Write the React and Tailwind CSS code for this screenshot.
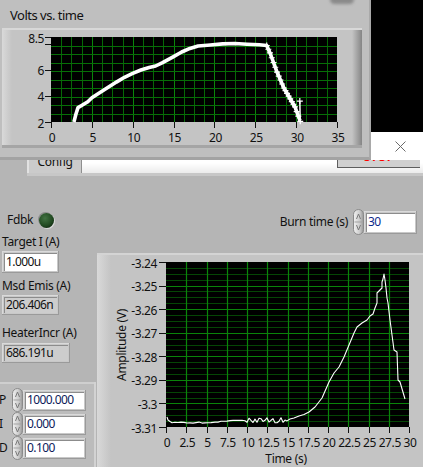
import React from 'react';

// deterministic jitter for the noisy part of the trace
const noise = (i) => {
  const x = Math.sin(i * 12.9898) * 43758.5453;
  return x - Math.floor(x);
};
const px = (v) => Math.round(v) + 0.5;

const Spinner = ({ h = 24 }) => (
  <svg width="11" height={h} viewBox={`0 0 11 ${h}`} className="block shrink-0">
    <defs>
      <linearGradient id="spg" x1="0" y1="0" x2="1" y2="0">
        <stop offset="0" stopColor="#f2f2f2" />
        <stop offset="0.6" stopColor="#cdcdcd" />
        <stop offset="1" stopColor="#979797" />
      </linearGradient>
    </defs>
    <rect x="0.5" y="0.5" width="10" height={h - 1} rx="5" fill="url(#spg)" stroke="#8a8a8a" />
    <line x1="1.5" x2="9.5" y1={h / 2} y2={h / 2} stroke="#a3a3a3" />
    <path d={`M3.5 ${h / 2 - 3} L5.5 ${h / 2 - 8} L7.5 ${h / 2 - 3}`} fill="none" stroke="#7a7a7a" />
    <path d={`M3.5 ${h / 2 + 3} L5.5 ${h / 2 + 8} L7.5 ${h / 2 + 3}`} fill="none" stroke="#7a7a7a" />
  </svg>
);

const NumBox = ({ className = '', value, ind, tone = 'text-[#0d1a5a]' }) => (
  <div className={`flex shrink-0 p-[2px] bg-[#c8c8c8] shadow-[inset_-1px_-1px_0_#9a9a9a,inset_1px_1px_0_#dadada] ${className}`}>
    <div
      className={`flex-1 flex items-center pl-[2px] shadow-[inset_1px_1px_0_#8c8c8c] text-[12px] leading-none tracking-[-0.6px] ${
        ind ? 'bg-[#cdcdcd] text-[#111]' : `bg-white ${tone}`
      }`}
    >
      {value}
    </div>
  </div>
);

function VoltsChart() {
  const L = 49, R = 335, T = 9, B = 94;
  const vx = (t) => L + (t * (R - L)) / 35;
  const vy = (v) => T + ((8.5 - v) * (B - T)) / 6.5;
  const vlines = Array.from({ length: 27 }, (_, i) => L + ((i + 1) * (R - L)) / 28);
  const hlines = Array.from({ length: 9 }, (_, i) => T + ((i + 1) * (B - T)) / 10);

  const data = [
    [2.8, 2], [3.05, 2.6], [3.3, 3.1], [3.7, 3.25], [4.5, 3.55], [5, 3.85], [6, 4.25], [7, 4.65],
    [8, 5.05], [9, 5.42], [10, 5.72], [11, 5.98], [12, 6.17], [12.8, 6.28], [13.6, 6.52], [15, 7.0],
    [16, 7.35], [17, 7.63], [18, 7.81], [19.5, 7.89], [21, 7.97], [22.5, 8.0], [24, 7.95], [25.5, 7.9],
    [26.4, 7.85], [26.8, 7.28], [27.66, 5.82], [28.5, 4.6], [29.86, 3.15], [30.47, 2.1],
  ];
  const pts = data.map(([t, v]) => `${vx(t).toFixed(1)},${vy(v).toFixed(1)}`).join(' ');

  const drop = data.slice(24);
  const marks = [];
  for (let i = 0; i < drop.length - 1; i++) {
    const [t0, v0] = drop[i];
    const [t1, v1] = drop[i + 1];
    const n = Math.ceil((t1 - t0) / 0.22);
    for (let k = 0; k < n; k++) {
      const f = k / n;
      marks.push([vx(t0 + (t1 - t0) * f), vy(v0 + (v1 - v0) * f)]);
    }
  }
  marks.push([vx(30.45), vy(3.6)], [vx(30.5), vy(2.05)]);

  return (
    <svg width="360" height="120" className="block text-[12px] tracking-[-0.4px]">
      <rect x={L} y={T} width={R - L} height={B - T} fill="#000" />
      {vlines.map((x, i) => (
        <line key={'v' + i} x1={px(x)} x2={px(x)} y1={T} y2={B} stroke={(i + 1) % 4 === 0 ? '#0a850a' : '#066806'} />
      ))}
      {hlines.map((y, i) => (
        <line key={'h' + i} x1={L} x2={R} y1={px(y)} y2={px(y)} stroke="#076e07" />
      ))}
      <polyline points={pts} fill="none" stroke="#fff" strokeWidth="3.6" strokeLinejoin="round" />
      <line x1={vx(30.45)} x2={vx(30.5)} y1={vy(3.6)} y2={vy(2)} stroke="#fff" strokeWidth="1.5" />
      {marks.map(([x, y], i) => (
        <path key={'m' + i} d={`M${x - 3} ${y} H${x + 3} M${x} ${y - 3} V${y + 3}`} stroke="#fff" strokeWidth="1.2" />
      ))}
      {[2, 4, 6, 8, 8.5].map((v) => (
        <line key={'yt' + v} x1={L - 6} x2={L} y1={px(vy(v))} y2={px(vy(v))} stroke="#111" />
      ))}
      {[['2', 2], ['4', 4], ['6', 6], ['8.5', 8.5]].map(([s, v]) => (
        <text key={'yl' + s} x={L - 7} y={vy(v) + 1} textAnchor="end" dominantBaseline="central" fill="#111">
          {s}
        </text>
      ))}
      {[0, 5, 10, 15, 20, 25, 30, 35].map((t) => (
        <g key={'xt' + t}>
          <line x1={px(vx(t))} x2={px(vx(t))} y1={B} y2={B + 6} stroke="#111" />
          <text x={vx(t) + 1} y={B + 15} textAnchor="middle" dominantBaseline="central" fill="#111">
            {t}
          </text>
        </g>
      ))}
    </svg>
  );
}

function AmpChart() {
  const L = 69, R = 312, T = 9, B = 174;
  const ay = (i) => T + (i * (B - T)) / 7;
  const ax = (i) => L + (i * (R - L)) / 12;

  const pts = [[70, 164], [71, 167], [73, 168.5]];
  for (let x = 75; x <= 115; x += 3) pts.push([x, 169 + noise(x) * 1.2]);
  for (let x = 118; x <= 146; x += 3) pts.push([x, 169 - ((x - 115) / 31) * 2.5 + noise(x) * 0.8]);
  for (let x = 148; x <= 190; x += 2) pts.push([x, 167.3 + (noise(x) - 0.5) * 5]);
  pts.push(
    [193, 166], [197, 165], [202, 163], [207, 161.5], [212, 159], [218, 154], [225, 145], [232, 129],
    [237, 120], [242, 114], [247, 104], [252, 92], [257, 80], [260, 74], [265, 70], [270, 67],
    [273, 63], [276, 61], [278, 55], [280, 50], [280, 40], [283, 37], [285, 35], [285, 29],
    [286, 26], [287, 21], [288, 27], [289, 35], [290, 45], [291, 50], [293, 67], [297, 97],
    [300, 99], [301, 127], [303, 129], [308, 146]
  );
  const line = pts.map(([x, y]) => `${x},${y.toFixed(1)}`).join(' ');

  const ylabels = ['-3.24', '-3.25', '-3.26', '-3.27', '-3.28', '-3.29', '-3.3', '-3.31'];
  const xlabels = ['0', '2.5', '5', '7.5', '10', '12.5', '15', '17.5', '20', '22.5', '25', '27.5', '30'];

  return (
    <svg width="326" height="214" className="block text-[12px] tracking-[-0.4px]">
      <rect x={L} y={T} width={R - L} height={B - T} fill="#000" />
      {Array.from({ length: 28 }, (_, i) => i + 1)
        .filter((i) => i % 4 !== 0)
        .map((i) => {
          const y = px(T + (i * (B - T)) / 28);
          return <line key={'mh' + i} x1={L} x2={R} y1={y} y2={y} stroke="#054605" />;
        })}
      {Array.from({ length: 6 }, (_, i) => i + 1).map((i) => (
        <line key={'h' + i} x1={L} x2={R} y1={px(ay(i))} y2={px(ay(i))} stroke="#0a840a" strokeWidth="1.2" />
      ))}
      {Array.from({ length: 11 }, (_, i) => i + 1).map((i) => (
        <line key={'v' + i} x1={px(ax(i))} x2={px(ax(i))} y1={T} y2={B} stroke="#0a840a" strokeWidth="1.2" />
      ))}
      <polyline points={line} fill="none" stroke="#fff" strokeWidth="1.1" strokeLinejoin="round" />
      {ylabels.map((s, i) => (
        <g key={s}>
          <line x1={L - 7} x2={L} y1={px(ay(i))} y2={px(ay(i))} stroke="#111" />
          <text x={L - 9} y={ay(i) + 1} textAnchor="end" dominantBaseline="central" fill="#111">
            {s}
          </text>
        </g>
      ))}
      {xlabels.map((s, i) => (
        <g key={s}>
          <line x1={px(ax(i))} x2={px(ax(i))} y1={B} y2={B + 6} stroke="#111" />
          <text x={ax(i) + 1} y={B + 15} textAnchor="middle" dominantBaseline="central" fill="#111">
            {s}
          </text>
        </g>
      ))}
      <text x="189" y="205" textAnchor="middle" dominantBaseline="central" fill="#111" className="tracking-[-0.3px]">
        Time (s)
      </text>
      <text
        x="24"
        y="92"
        transform="rotate(-90 24 92)"
        textAnchor="middle"
        dominantBaseline="central"
        fill="#111"
        className="tracking-[-0.3px]"
      >
        Amplitude (V)
      </text>
    </svg>
  );
}

const PidRow = ({ label, value }) => (
  <div className="flex items-center h-[24px]">
    <span className="w-[13px] -ml-[1px] text-[12px] leading-none">{label}</span>
    <Spinner h={24} />
    <NumBox className="w-[63px] h-[21px]" value={value} />
  </div>
);

export default function App() {
  return (
    <div className="relative w-[423px] h-[467px] overflow-hidden bg-[#b5b5b5] font-['Noto_Sans',sans-serif] text-[#111] select-none">
      {/* main front panel */}
      <div className="flex flex-col h-full">
        <div className="h-[148px] shrink-0" />
        <div className="flex h-[25px] shrink-0">
          <div className="w-[27px]" />
          <div className="w-[55px] flex items-end justify-center pb-[5px] bg-[#cbcbcb] border-l-2 border-l-[#e2e2e2] border-r border-r-[#8f8f8f] text-[12px] leading-none tracking-[-0.3px]">
            Config
          </div>
          <div className="flex-1 flex justify-end pr-[3px] bg-[linear-gradient(#ffffff,#ffffff_60%,#ebebeb)]">
            <div className="w-[83px] h-[20px] flex items-end justify-center pb-[4px] bg-[#d0d0d0] border-l border-b border-[#5e5e5e] text-[12px] font-bold leading-none text-[#f00]">
              STOP
            </div>
          </div>
        </div>
        <div className="h-[3px] ml-[27px] shrink-0 bg-[#c7c7c7]" />

        <div className="flex flex-1 min-h-0">
          {/* left column */}
          <div className="w-[97px] shrink-0 flex flex-col text-[12px] leading-[14px] tracking-[-0.3px]">
            <div className="mt-[36px] h-[16px] flex items-center pl-[7px]">
              <span>Fdbk</span>
              <div className="ml-[6px] w-[15px] h-[15px] rounded-full bg-[radial-gradient(circle_at_40%_35%,#427242,#214a21_55%,#0f260f_85%)] shadow-[1px_1px_0_#d8d8d8,-1px_-1px_0_#8c8c8c]" />
            </div>
            <div className="mt-[7px] h-[14px] pl-[2px]">Target I (A)</div>
            <NumBox className="mt-[2px] ml-[2px] w-[57px] h-[22px]" value="1.000u" tone="text-[#111]" />
            <div className="mt-[6px] h-[14px] pl-[2px]">Msd Emis (A)</div>
            <NumBox className="mt-[2px] ml-[2px] w-[57px] h-[20px]" value="206.406n" ind />
            <div className="mt-[11px] h-[14px] pl-[2px]">HeaterIncr (A)</div>
            <NumBox className="mt-[3px] ml-[2px] w-[68px] h-[20px]" value="686.191u" ind />
            <div className="mt-[19px] flex-1 w-[96px] pt-[6px] flex flex-col bg-[#bcbcbc] border-r-2 border-r-[#d3d3d3] shadow-[inset_0_2px_0_#cfcfcf]">
              <PidRow label="P" value="1000.000" />
              <PidRow label="I" value="0.000" />
              <PidRow label="D" value="0.100" />
            </div>
          </div>

          {/* right column */}
          <div className="flex-1 min-w-0 flex flex-col">
            <div className="mt-[33px] h-[26px] flex items-center justify-end pr-[6px]">
              <span className="mr-[5px] text-[12px] leading-none tracking-[-0.3px]">Burn time (s)</span>
              <Spinner h={26} />
              <NumBox className="w-[53px] h-[23px]" value="30" tone="text-[#0b2a8a]" />
            </div>
            <div className="mt-[18px] flex-1 bg-[linear-gradient(to_right,#d9d9d9,#c4c4c4_14px)] shadow-[inset_0_2px_0_#d4d4d4]">
              <AmpChart />
            </div>
          </div>
        </div>
      </div>

      {/* Volts vs. time window on top */}
      <div className="absolute left-0 top-0 w-[371px] h-[160px] flex flex-col bg-[#bfbfbf] border-b-[3px] border-b-[#a3a3a3] border-r-2 border-r-[#a9a9a9]">
        <div className="absolute left-[330px] -top-[5px] w-[24px] h-[9px] rounded-full bg-[#8a8a8a] blur-[1.5px]" />
        <div className="h-[28px] shrink-0 pl-[10px] pt-[9px] text-[13px] leading-none tracking-[-0.5px]">Volts vs. time</div>
        <div className="ml-[2px] w-[360px] h-[120px] shrink-0 bg-[linear-gradient(to_right,#d9d9d9,#c4c4c4_10px,#c4c4c4_calc(100%_-_10px),#858585)] shadow-[inset_0_2px_0_#d8d8d8,inset_0_-3px_0_#a5a5a5]">
          <VoltsChart />
        </div>
      </div>

      {/* other windows at the right edge */}
      <div className="absolute left-[371px] top-0 w-[52px] h-[132px] bg-black" />
      <div className="absolute left-[371px] top-[132px] w-[52px] h-[28px] flex items-center pl-[24px] bg-white">
        <svg width="11" height="11" className="block">
          <path d="M0.5 0.5 L10.5 10.5 M10.5 0.5 L0.5 10.5" stroke="#6a6a6a" strokeWidth="1" />
        </svg>
      </div>
    </div>
  );
}
